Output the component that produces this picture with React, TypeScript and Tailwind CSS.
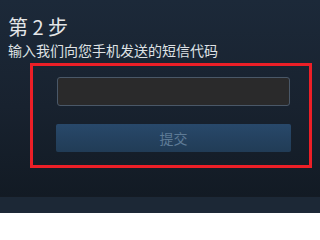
export default function App() {
  return (
    <main
      className="flex h-[213px] w-[320px] flex-col overflow-hidden bg-gradient-to-b from-[#1c2939] via-[#18222f] to-[#111922] text-[#e4e6e8]"
      style={{ fontFamily: '"Noto Sans CJK SC", "Noto Sans", sans-serif' }}
    >
      <div className="h-[196px] px-[8px] pt-[14px]">
        <h1 className="text-[20px] leading-[26px] font-normal">第 2 步</h1>
        <p className="text-[14px] leading-[20px] text-[#dfe2e5]">
          输入我们向您手机发送的短信代码
        </p>

        {/* highlighted form */}
        <div className="mt-[3px] ml-[22px] h-[105px] w-[282px] border-[3px] border-[#ec1f27] pt-[11px] pr-[19px] pl-[24px]">
          <input
            type="text"
            className="block h-[29px] w-[233px] rounded-[3px] border border-[#4a5868] bg-[#2a2a2b] outline-none"
          />
          <button className="mt-[18px] -ml-[1px] flex h-[28px] w-[235px] items-center justify-center rounded-[2px] bg-gradient-to-b from-[#28486a] to-[#213c56] text-[14px] text-[#5e7b96]">
            提交
          </button>
        </div>
      </div>

      {/* bottom bar */}
      <div className="flex-1 border-t border-[#141b24] bg-[#1c2836]" />
    </main>
  );
}
